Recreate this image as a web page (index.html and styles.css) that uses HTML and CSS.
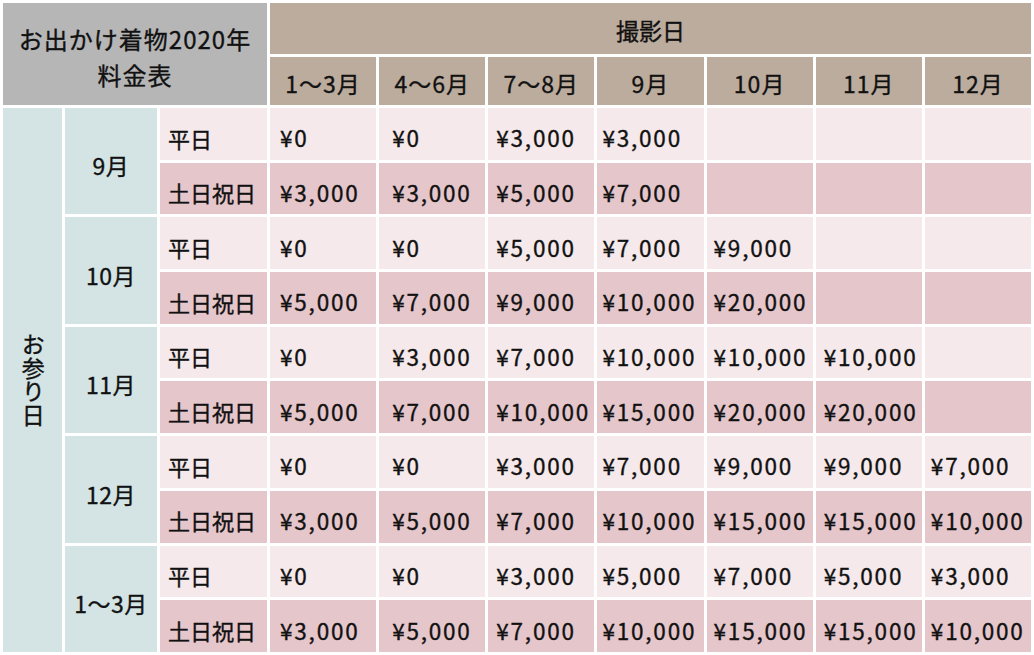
FILE: index.html
```html
<!DOCTYPE html>
<html lang="ja">
<head>
<meta charset="utf-8">
<title>お出かけ着物2020年 料金表</title>
<link rel="stylesheet" href="styles.css">
</head>
<body>
<div class="sheet">
  <div class="corner">お出かけ着物2020年<br>料金表</div>
  <div class="shoot">撮影日</div>
  <div class="mh">1〜3月</div>
  <div class="mh">4〜6月</div>
  <div class="mh">7〜8月</div>
  <div class="mh">9月</div>
  <div class="mh">10月</div>
  <div class="mh">11月</div>
  <div class="mh">12月</div>

  <div class="visit">お参り日</div>

  <div class="month r1">9月</div>
  <div class="day wk">平日</div>
  <div class="p wk c1">¥0</div><div class="p wk c2">¥0</div><div class="p wk c3">¥3,000</div><div class="p wk c4">¥3,000</div><div class="p wk c5"></div><div class="p wk c6"></div><div class="p wk c7"></div>
  <div class="day hol">土日祝日</div>
  <div class="p hol c1">¥3,000</div><div class="p hol c2">¥3,000</div><div class="p hol c3">¥5,000</div><div class="p hol c4">¥7,000</div><div class="p hol c5"></div><div class="p hol c6"></div><div class="p hol c7"></div>

  <div class="month r2">10月</div>
  <div class="day wk">平日</div>
  <div class="p wk c1">¥0</div><div class="p wk c2">¥0</div><div class="p wk c3">¥5,000</div><div class="p wk c4">¥7,000</div><div class="p wk c5">¥9,000</div><div class="p wk c6"></div><div class="p wk c7"></div>
  <div class="day hol">土日祝日</div>
  <div class="p hol c1">¥5,000</div><div class="p hol c2">¥7,000</div><div class="p hol c3">¥9,000</div><div class="p hol c4">¥10,000</div><div class="p hol c5">¥20,000</div><div class="p hol c6"></div><div class="p hol c7"></div>

  <div class="month r3">11月</div>
  <div class="day wk">平日</div>
  <div class="p wk c1">¥0</div><div class="p wk c2">¥3,000</div><div class="p wk c3">¥7,000</div><div class="p wk c4">¥10,000</div><div class="p wk c5">¥10,000</div><div class="p wk c6">¥10,000</div><div class="p wk c7"></div>
  <div class="day hol">土日祝日</div>
  <div class="p hol c1">¥5,000</div><div class="p hol c2">¥7,000</div><div class="p hol c3">¥10,000</div><div class="p hol c4">¥15,000</div><div class="p hol c5">¥20,000</div><div class="p hol c6">¥20,000</div><div class="p hol c7"></div>

  <div class="month r4">12月</div>
  <div class="day wk">平日</div>
  <div class="p wk c1">¥0</div><div class="p wk c2">¥0</div><div class="p wk c3">¥3,000</div><div class="p wk c4">¥7,000</div><div class="p wk c5">¥9,000</div><div class="p wk c6">¥9,000</div><div class="p wk c7">¥7,000</div>
  <div class="day hol">土日祝日</div>
  <div class="p hol c1">¥3,000</div><div class="p hol c2">¥5,000</div><div class="p hol c3">¥7,000</div><div class="p hol c4">¥10,000</div><div class="p hol c5">¥15,000</div><div class="p hol c6">¥15,000</div><div class="p hol c7">¥10,000</div>

  <div class="month r5">1〜3月</div>
  <div class="day wk">平日</div>
  <div class="p wk c1">¥0</div><div class="p wk c2">¥0</div><div class="p wk c3">¥3,000</div><div class="p wk c4">¥5,000</div><div class="p wk c5">¥7,000</div><div class="p wk c6">¥5,000</div><div class="p wk c7">¥3,000</div>
  <div class="day hol">土日祝日</div>
  <div class="p hol c1">¥3,000</div><div class="p hol c2">¥5,000</div><div class="p hol c3">¥7,000</div><div class="p hol c4">¥10,000</div><div class="p hol c5">¥15,000</div><div class="p hol c6">¥15,000</div><div class="p hol c7">¥10,000</div>
</div>
</body>
</html>
```

FILE: styles.css
```css
html, body {
  margin: 0;
  padding: 0;
  background: #ffffff;
}

body {
  font-family: "Noto Sans CJK JP", "Noto Sans", sans-serif;
  color: #111111;
}

.sheet {
  box-sizing: border-box;
  width: 1034px;
  padding: 3px;
  display: grid;
  grid-template-columns: 59px 92px 107px repeat(7, 1fr);
  grid-template-rows: 51px 48px repeat(10, 51.7px);
  gap: 3px;
  background: #ffffff;
}

.sheet > div {
  display: flex;
  align-items: center;
  box-sizing: border-box;
  line-height: 1.2;
  white-space: nowrap;
  overflow: hidden;
  -webkit-text-stroke: 0.35px currentColor;
}

.corner {
  grid-column: 1 / 4;
  grid-row: 1 / 3;
  background: #b6b6b6;
  justify-content: center;
  text-align: center;
  font-size: 24px;
  line-height: 36px !important;
  letter-spacing: 1px;
  padding-top: 6px;
}

.shoot {
  grid-column: 4 / 11;
  grid-row: 1;
  background: #bcac9e;
  justify-content: center;
  font-size: 23px;
  padding-top: 5px;
}

.mh {
  background: #bcac9e;
  justify-content: center;
  font-size: 23px;
  letter-spacing: 1px;
  padding-top: 5px;
}

.visit {
  grid-column: 1;
  grid-row: 3 / 13;
  background: #d4e4e4;
  justify-content: center;
  writing-mode: vertical-rl;
  text-orientation: upright;
  font-size: 23px;
  letter-spacing: 0.5px;
}

.month {
  grid-column: 2;
  background: #d4e4e4;
  justify-content: center;
  font-size: 23px;
  letter-spacing: 0.5px;
  padding-top: 10px;
}

.r1 { grid-row: 3 / 5; }
.r2 { grid-row: 5 / 7; }
.r3 { grid-row: 7 / 9; }
.r4 { grid-row: 9 / 11; }
.r5 { grid-row: 11 / 13; }

.day {
  font-size: 22px;
  padding-left: 8px;
  padding-top: 8px;
}

.p {
  font-size: 22.5px;
  letter-spacing: 1.8px;
  padding-top: 8px;
  padding-left: 9px;
}

.wk { background: #f5e9eb; }
.hol { background: #e5c6cb; }

.c1 { padding-left: 10px; }
.c2 { padding-left: 13px; }
.c3 { padding-left: 8px; }
.c4 { padding-left: 5px; }
.c5 { padding-left: 7px; }
.c6 { padding-left: 8px; }
.c7 { padding-left: 6px; }
```
